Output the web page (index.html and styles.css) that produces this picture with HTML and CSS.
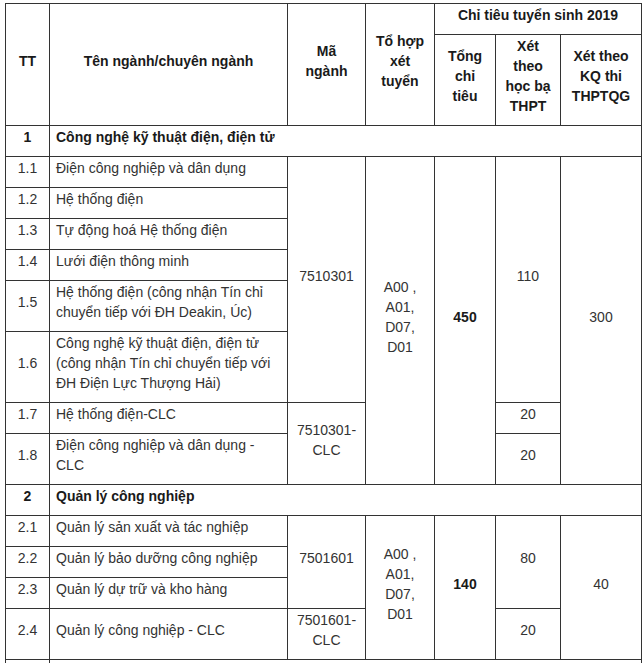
FILE: index.html
```html
<!DOCTYPE html>
<html lang="vi">
<head>
<meta charset="utf-8">
<title>Chỉ tiêu tuyển sinh 2019</title>
<link rel="stylesheet" href="styles.css">
</head>
<body>
<table class="quota">
  <colgroup>
    <col class="c-tt"><col class="c-name"><col class="c-code"><col class="c-combo"><col class="c-total"><col class="c-hb"><col class="c-kq">
  </colgroup>
  <thead>
    <tr>
      <th rowspan="2" class="mid">TT</th>
      <th rowspan="2" class="mid">Tên ngành/chuyên ngành</th>
      <th rowspan="2" class="mid">Mã<br>ngành</th>
      <th rowspan="2" class="mid">Tổ hợp<br>xét<br>tuyển</th>
      <th colspan="3">Chỉ tiêu tuyển sinh 2019</th>
    </tr>
    <tr>
      <th>Tổng<br>chỉ<br>tiêu</th>
      <th>Xét<br>theo<br>học bạ<br>THPT</th>
      <th>Xét theo<br>KQ thi<br>THPTQG</th>
    </tr>
  </thead>
  <tbody>
    <tr class="group">
      <td class="tt">1</td>
      <td colspan="6" class="name">Công nghệ kỹ thuật điện, điện tử</td>
    </tr>
    <tr>
      <td class="tt">1.1</td>
      <td class="name">Điện công nghiệp và dân dụng</td>
      <td rowspan="6" class="c">7510301</td>
      <td rowspan="8" class="c">A00 ,<br>A01,<br>D07,<br>D01</td>
      <td rowspan="8" class="c strong">450</td>
      <td rowspan="6" class="c">110</td>
      <td rowspan="8" class="c">300</td>
    </tr>
    <tr><td class="tt">1.2</td><td class="name">Hệ thống điện</td></tr>
    <tr><td class="tt">1.3</td><td class="name">Tự động hoá Hệ thống điện</td></tr>
    <tr><td class="tt">1.4</td><td class="name">Lưới điện thông minh</td></tr>
    <tr><td class="tt">1.5</td><td class="name">Hệ thống điện (công nhận Tín chỉ<br>chuyển tiếp với ĐH Deakin, Úc)</td></tr>
    <tr><td class="tt">1.6</td><td class="name">Công nghệ kỹ thuật điện, điện tử<br>(công nhận Tín chỉ chuyển tiếp với<br>ĐH Điện Lực Thượng Hải)</td></tr>
    <tr>
      <td class="tt">1.7</td>
      <td class="name">Hệ thống điện-CLC</td>
      <td rowspan="2" class="c">7510301-<br>CLC</td>
      <td class="c">20</td>
    </tr>
    <tr>
      <td class="tt">1.8</td>
      <td class="name">Điện công nghiệp và dân dụng -<br>CLC</td>
      <td class="c">20</td>
    </tr>
    <tr class="group">
      <td class="tt">2</td>
      <td colspan="6" class="name">Quản lý công nghiệp</td>
    </tr>
    <tr>
      <td class="tt">2.1</td>
      <td class="name">Quản lý sản xuất và tác nghiệp</td>
      <td rowspan="3" class="c">7501601</td>
      <td rowspan="4" class="c">A00 ,<br>A01,<br>D07,<br>D01</td>
      <td rowspan="4" class="c strong">140</td>
      <td rowspan="3" class="c">80</td>
      <td rowspan="4" class="c">40</td>
    </tr>
    <tr><td class="tt">2.2</td><td class="name">Quản lý bảo dưỡng công nghiệp</td></tr>
    <tr><td class="tt">2.3</td><td class="name">Quản lý dự trữ và kho hàng</td></tr>
    <tr>
      <td class="tt">2.4</td>
      <td class="name">Quản lý công nghiệp - CLC</td>
      <td class="c">7501601-<br>CLC</td>
      <td class="c">20</td>
    </tr>
    <tr class="group">
      <td class="tt">3</td>
      <td colspan="6" class="name">Công nghệ kỹ thuật điện tử - viễn thông</td>
    </tr>
  </tbody>
</table>
</body>
</html>
```

FILE: styles.css
```css
html, body {
  margin: 0;
  padding: 0;
  background: #ffffff;
}
body {
  padding: 3px 0 0 5px;
  font-family: "Liberation Sans", Arial, sans-serif;
  font-size: 14px;
  line-height: 20px;
  color: #333333;
}
.quota {
  border-collapse: collapse;
  table-layout: fixed;
  width: 637px;
}
.c-tt { width: 44px; }
.c-name { width: 238px; }
.c-code { width: 78px; }
.c-combo { width: 69px; }
.c-total { width: 61px; }
.c-hb { width: 65px; }
.c-kq { width: 81px; }
.quota th,
.quota td {
  border: 1px solid #333333;
  padding: 1px 6px 9px;
  vertical-align: middle;
}
.quota th {
  font-weight: bold;
  color: #1a1a1a;
  text-align: center;
}
.quota td.tt { text-align: center; }
.quota td.name { text-align: left; }
.quota td.c { text-align: center; }
.quota td.strong { font-weight: bold; color: #1a1a1a; }
.quota tr.group td { font-weight: bold; color: #1a1a1a; }
```
